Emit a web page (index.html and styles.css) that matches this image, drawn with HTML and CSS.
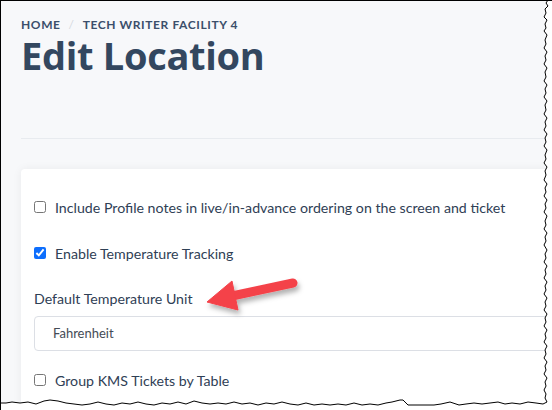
FILE: index.html
```html
<!DOCTYPE html>
<html lang="en">
<head>
  <meta charset="utf-8" />
  <title>Edit Location</title>
  <link rel="stylesheet" href="styles.css">
</head>
<body>

  <div class="shot">
    <div class="page">
      <div class="breadcrumb">
        <span>HOME</span>
        <span class="sep">/</span>
        <span>TECH WRITER FACILITY 4</span>
      </div>
      <h1 class="title">Edit Location</h1>

      <div class="divider"></div>

      <div class="card">
        <label class="check-row">
          <input type="checkbox" />
          <span>Include Profile notes in live/in-advance ordering on the screen and ticket</span>
        </label>

        <label class="check-row">
          <input type="checkbox" checked />
          <span>Enable Temperature Tracking</span>
        </label>

        <div class="field">
          <div class="field-label">Default Temperature Unit</div>
          <div class="select">Fahrenheit</div>
        </div>

        <label class="check-row">
          <input type="checkbox" />
          <span>Group KMS Tickets by Table</span>
        </label>
      </div>
    </div>

    <!-- callout arrow -->
    <svg class="arrow" width="552" height="410" viewBox="0 0 552 410">
      <defs>
        <filter id="soft" x="-20%" y="-50%" width="140%" height="200%">
          <feDropShadow dx="2" dy="4" stdDeviation="2.5" flood-color="#000" flood-opacity="0.3" />
        </filter>
      </defs>
      <g filter="url(#soft)" fill="#f4424a" stroke="#f4424a">
        <line x1="293" y1="283" x2="232" y2="296" stroke-width="9" stroke-linecap="round" />
        <polygon points="207,302 232,281 238,310" stroke-width="1" stroke-linejoin="round" />
      </g>
    </svg>

    <!-- torn paper edge -->
    <svg class="torn" width="552" height="410" viewBox="0 0 552 410">
      <path fill="#fff" stroke="none"
        d="M552,0 L548,0 L546,3 L548,6 L545,9 L546,13 L544,17 L547,20 L545,24 L546,28 L544,31 L547,35 L545,40 L546,44 L544,48 L547,52 L545,56 L546,60 L544,64 L547,68 L545,72 L546,77 L544,81 L547,85 L545,89 L546,93 L544,97 L547,101 L545,105 L546,110 L544,114 L547,118 L545,122 L546,126 L544,130 L547,134 L545,138 L546,142 L544,146 L547,150 L545,155 L546,159 L544,163 L547,167 L545,171 L546,175 L544,180 L547,184 L545,188 L546,192 L544,196 L547,200 L545,204 L546,208 L544,212 L547,216 L545,221 L546,225 L544,229 L547,233 L545,237 L546,241 L544,245 L547,250 L545,254 L546,258 L544,262 L547,266 L545,270 L546,274 L544,278 L547,282 L545,286 L546,290 L544,294 L547,298 L545,302 L546,306 L544,310 L547,314 L545,318 L546,322 L544,326 L547,330 L545,334 L546,338 L544,342 L547,346 L545,350 L546,354 L544,358 L547,362 L545,366 L546,370 L544,374 L547,378 L545,382 L546,386 L544,390 L546,394 L545,398 L547,402 L543,404 L536,403 L528,402 L520,404 L512,403 L505,404 L498,402 L490,403 L482,404 L474,403 L466,404 L459,405 L450,402 L441,404 L434,405 L408,405 L405,402 L403,400 L400,400 L392,402 L386,403 L378,405 L370,404 L362,405 L354,403 L346,405 L338,404 L330,405 L322,404 L314,405 L306,403 L298,405 L290,404 L282,402 L274,404 L266,403 L258,405 L250,403 L242,404 L234,402 L226,404 L218,403 L210,404 L202,403 L194,401 L186,404 L178,402 L170,404 L162,403 L154,405 L146,404 L138,402 L130,404 L122,403 L114,405 L106,404 L98,402 L90,404 L82,405 L74,404 L66,403 L58,401 L50,400 L44,401 L36,404 L28,402 L20,403 L12,402 L6,403 L0,403 L0,410 L552,410 Z" />
      <path fill="none" stroke="#000" stroke-width="1"
        d="M548,0 L546,3 L548,6 L545,9 L546,13 L544,17 L547,20 L545,24 L546,28 L544,31 L547,35 L545,40 L546,44 L544,48 L547,52 L545,56 L546,60 L544,64 L547,68 L545,72 L546,77 L544,81 L547,85 L545,89 L546,93 L544,97 L547,101 L545,105 L546,110 L544,114 L547,118 L545,122 L546,126 L544,130 L547,134 L545,138 L546,142 L544,146 L547,150 L545,155 L546,159 L544,163 L547,167 L545,171 L546,175 L544,180 L547,184 L545,188 L546,192 L544,196 L547,200 L545,204 L546,208 L544,212 L547,216 L545,221 L546,225 L544,229 L547,233 L545,237 L546,241 L544,245 L547,250 L545,254 L546,258 L544,262 L547,266 L545,270 L546,274 L544,278 L547,282 L545,286 L546,290 L544,294 L547,298 L545,302 L546,306 L544,310 L547,314 L545,318 L546,322 L544,326 L547,330 L545,334 L546,338 L544,342 L547,346 L545,350 L546,354 L544,358 L547,362 L545,366 L546,370 L544,374 L547,378 L545,382 L546,386 L544,390 L546,394 L545,398 L547,402 L543,404 L536,403 L528,402 L520,404 L512,403 L505,404 L498,402 L490,403 L482,404 L474,403 L466,404 L459,405 L450,402 L441,404 L434,405 L408,405 L405,402 L403,400 L400,400 L392,402 L386,403 L378,405 L370,404 L362,405 L354,403 L346,405 L338,404 L330,405 L322,404 L314,405 L306,403 L298,405 L290,404 L282,402 L274,404 L266,403 L258,405 L250,403 L242,404 L234,402 L226,404 L218,403 L210,404 L202,403 L194,401 L186,404 L178,402 L170,404 L162,403 L154,405 L146,404 L138,402 L130,404 L122,403 L114,405 L106,404 L98,402 L90,404 L82,405 L74,404 L66,403 L58,401 L50,400 L44,401 L36,404 L28,402 L20,403 L12,402 L6,403 L0,403" />
    </svg>
  </div>

</body>
</html>
```

FILE: styles.css
```css
body {
  margin: 0;
  background: #fff;
  font-family: Lato, "Open Sans", sans-serif;
  color: #2f4055;
}

.shot {
  position: relative;
  width: 552px;
  height: 410px;
  overflow: hidden;
  box-sizing: border-box;
  border-top: 1px solid #000;
  border-left: 1px solid #000;
  background: #f7f8fa;
}

.page {
  padding: 17px 0 0 20px;
}

.breadcrumb {
  display: flex;
  gap: 8px;
  font-size: 12px;
  font-weight: bold;
  letter-spacing: 0.6px;
  color: #3b4f6b;
  line-height: 14px;
}

.breadcrumb .sep {
  color: #d5d9df;
  font-weight: normal;
}

.title {
  margin: 1px 0 0;
  font-family: "Open Sans", sans-serif;
  font-size: 38px;
  font-weight: bold;
  line-height: 44px;
  color: #33475f;
  letter-spacing: -0.3px;
}

.divider {
  height: 1px;
  background: #e8ebef;
  margin-top: 61px;
  width: 560px;
}

.card {
  margin-top: 30px;
  width: 560px;
  background: #fff;
  border-radius: 4px;
  box-shadow: 0 0 10px rgba(0, 0, 0, 0.06);
  padding: 28px 0 20px 13px;
  font-size: 14.2px;
}

.check-row {
  display: flex;
  align-items: center;
  gap: 9px;
  height: 20px;
  margin-bottom: 26px;
  white-space: nowrap;
}

.check-row input {
  margin: 0;
  width: 12px;
  height: 12px;
  accent-color: #0d6efd;
}

.field {
  margin-bottom: 19px;
}

.field-label {
  line-height: 20px;
  margin-bottom: 7px;
}

.select {
  height: 35px;
  box-sizing: border-box;
  border: 1px solid #dcdfe5;
  border-radius: 4px;
  padding: 0 18px;
  line-height: 33px;
  font-size: 13px;
  color: #444b55;
}

.arrow,
.torn {
  position: absolute;
  left: -1px;
  top: -1px;
}
```
